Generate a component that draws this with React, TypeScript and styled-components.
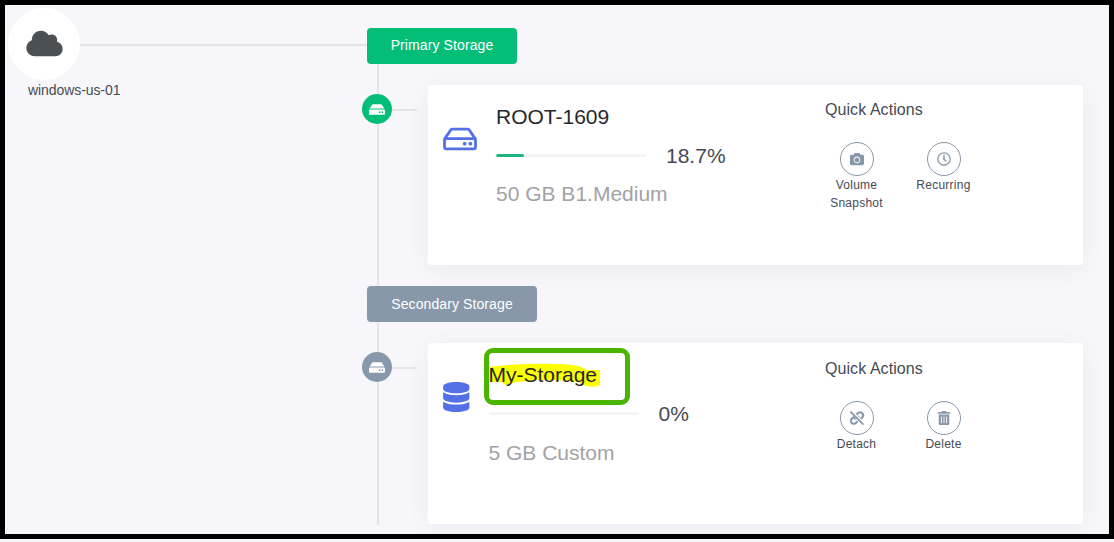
import React from "react";
import styled, { createGlobalStyle } from "styled-components";
import { FaCloud, FaHdd, FaRegHdd, FaDatabase, FaCamera, FaRegClock, FaTrashAlt } from "react-icons/fa";

const GlobalStyle = createGlobalStyle`
  * { box-sizing: border-box; }
  body { margin: 0; background: #f7f7fb; font-family: "Liberation Sans", Arial, sans-serif; color: #464a53; }
`;

const Frame = styled.main`
  height: 539px;
  border: 5px solid #000;
  background: #f7f7fb;
  display: flex;
  overflow: hidden;
`;

const Machine = styled.section`
  width: 362px;
  padding-top: 3px;
  padding-left: 3px;
`;

const MachineLink = styled.div`
  display: flex;
  align-items: center;
`;

const MachineBadge = styled.div`
  width: 72px;
  height: 72px;
  flex: none;
  border-radius: 50%;
  background: #fff;
  display: flex;
  align-items: center;
  justify-content: center;
  color: #4b5055;
  svg { width: 37px; height: 29px; margin-top: -2px; }
`;

const Connector = styled.div<{ $width?: number }>`
  height: 2px;
  margin-top: 2px;
  background: #e5e5e9;
  ${(p) => (p.$width ? `width: ${p.$width}px;` : "flex: 1;")}
`;

const MachineName = styled.div`
  margin: 2px 0 0 20px;
  font-size: 14px;
  line-height: 16px;
  letter-spacing: -0.08px;
`;

const Tree = styled.section`
  flex: 1;
  height: 520px;
  margin-left: -5px;
  padding-top: 23px;
  background: linear-gradient(#e5e5e9, #e5e5e9) 15px 23px / 2px 497px no-repeat;
`;

const Group = styled.div`
  height: 258px;
  display: flex;
  flex-direction: column;
  align-items: flex-start;
`;

const GroupLabel = styled.div<{ $width: number; $color: string; $lineHeight: number }>`
  width: ${(p) => p.$width}px;
  height: 36px;
  flex: none;
  margin-left: 5px;
  border-radius: 4px;
  background: ${(p) => p.$color};
  color: #fff;
  font-size: 14px;
  line-height: ${(p) => p.$lineHeight}px;
  text-align: center;
  letter-spacing: 0.1px;
`;

const Branch = styled.div`
  display: flex;
  margin-top: 21px;
`;

const Joint = styled.div`
  width: 66px;
  height: 30px;
  margin-top: 9px;
  display: flex;
  align-items: center;
`;

const Node = styled.div<{ $color: string }>`
  width: 30px;
  height: 30px;
  border-radius: 50%;
  background: ${(p) => p.$color};
  color: #fff;
  display: flex;
  align-items: center;
  justify-content: center;
  svg { width: 16px; height: 15px; }
`;

const Card = styled.article<{ $height: number }>`
  width: 655px;
  height: ${(p) => p.$height}px;
  border-radius: 3px;
  background: #fff;
  box-shadow: 0 4px 25px rgba(60, 50, 80, 0.07);
  display: flex;
`;

const Volume = styled.div`
  width: 397px;
  padding-left: 15px;
  display: flex;
`;

const VolumeIcon = styled.div<{ $column: number; $width: number }>`
  width: ${(p) => p.$column}px;
  padding-top: 39px;
  color: #5470e5;
  svg { height: 30px; width: ${(p) => p.$width}px; display: block; }
`;

const Details = styled.div`
  display: flex;
  flex-direction: column;
  font-size: 21px;
  line-height: 26px;
`;

const VolumeName = styled.div`
  position: relative;
  isolation: isolate;
  margin-top: 19px;
  color: #26282d;
`;

const Usage = styled.div`
  display: flex;
  align-items: center;
  gap: 20px;
  margin-top: 13px;
`;

const Track = styled.div`
  width: 150px;
  height: 3px;
  margin-bottom: 2px;
  border-radius: 2px;
  background: #f5f5f7;
  overflow: hidden;
`;

const Fill = styled.div`
  height: 100%;
  border-radius: 2px;
  background: #1eb37a;
`;

const Plan = styled.div<{ $gap: number }>`
  margin-top: ${(p) => p.$gap}px;
  color: #a1a2a6;
`;

const Marker = styled.svg`
  position: absolute;
  z-index: -1;
  left: 0;
  top: 1px;
`;

const Outline = styled.div`
  position: absolute;
  left: -5px;
  top: -14px;
  width: 146px;
  height: 57px;
  border: 5px solid #4ab400;
  border-radius: 9px;
`;

const Actions = styled.div<{ $top: number }>`
  padding-top: ${(p) => p.$top}px;
`;

const ActionsTitle = styled.div`
  font-size: 16px;
  line-height: 20px;
  letter-spacing: 0.07px;
`;

const ActionRow = styled.div`
  display: flex;
  margin: 22px 0 0 -12px;
`;

const Action = styled.div`
  width: 87px;
  display: flex;
  flex-direction: column;
  align-items: center;
  text-align: center;
  font-size: 12px;
  line-height: 18px;
  letter-spacing: 0.25px;
`;

const ActionIcon = styled.div`
  width: 34px;
  height: 34px;
  border: 1px solid #8898aa;
  border-radius: 50%;
  display: flex;
  align-items: center;
  justify-content: center;
  color: #8898aa;
  svg { height: 14px; width: 14px; }
`;

function BrokenLinkIcon() {
  return (
    <svg viewBox="0 0 14 14" fill="none" stroke="currentColor" strokeWidth="2.1" overflow="visible">
      <path d="M6 4.2 7.6 2.4C8.9 1 11 .9 12.2 2.2S13.4 5.4 12.1 6.7L10.4 8.2" />
      <path d="M4 5.8 1.9 7.6C.6 8.9.6 10.8 1.7 11.9S4.8 13 6.1 11.7L7.6 10.2" />
      <path d="M5.3 8.7C4.5 7.9 4.4 7 4.8 6.1M8.7 7.3C9 6.4 8.9 5.6 8.2 4.9" strokeWidth="1.7" />
      <path d="M2 0 14.8 12.8" stroke="#fff" strokeWidth="1.2" />
      <path d="M.4.6 13.4 13.6" strokeWidth="1.9" />
    </svg>
  );
}

type VolumeCardProps = {
  color: string;
  icon: React.ReactNode;
  iconColumn: number;
  iconWidth: number;
  name: React.ReactNode;
  used: number;
  plan: string;
  extra?: number;
  actions: { icon: React.ReactNode; label: React.ReactNode }[];
};

function VolumeCard({ color, icon, iconColumn, iconWidth, name, used, plan, extra = 0, actions }: VolumeCardProps) {
  return (
    <Branch>
      <Joint>
        <Node $color={color}><FaHdd /></Node>
        <Connector $width={25} />
      </Joint>
      <Card $height={180 + extra}>
        <Volume>
          <VolumeIcon $column={iconColumn} $width={iconWidth}>{icon}</VolumeIcon>
          <Details>
            <VolumeName>{name}</VolumeName>
            <Usage>
              <Track><Fill style={{ width: `${used}%` }} /></Track>
              <span>{used}%</span>
            </Usage>
            <Plan $gap={12 + extra}>{plan}</Plan>
          </Details>
        </Volume>
        <Actions $top={15 + extra}>
          <ActionsTitle>Quick Actions</ActionsTitle>
          <ActionRow>
            {actions.map((a, i) => (
              <Action key={i}><ActionIcon>{a.icon}</ActionIcon>{a.label}</Action>
            ))}
          </ActionRow>
        </Actions>
      </Card>
    </Branch>
  );
}

export default function App() {
  return (
    <>
      <GlobalStyle />
      <Frame>
        <Machine>
          <MachineLink>
            <MachineBadge><FaCloud /></MachineBadge>
            <Connector />
          </MachineLink>
          <MachineName>windows-us-01</MachineName>
        </Machine>
        <Tree>
          <Group>
            <GroupLabel $width={150} $color="#04be78" $lineHeight={35}>Primary Storage</GroupLabel>
            <VolumeCard
              color="#04be78"
              icon={<FaRegHdd />}
              iconColumn={53}
              iconWidth={34}
              name="ROOT-1609"
              used={18.7}
              plan="50 GB B1.Medium"
              actions={[
                { icon: <FaCamera />, label: <>Volume<br />Snapshot</> },
                { icon: <FaRegClock />, label: "Recurring" },
              ]}
            />
          </Group>
          <Group>
            <GroupLabel $width={170} $color="#8898aa" $lineHeight={37}>Secondary Storage</GroupLabel>
            <VolumeCard
              color="#8898aa"
              icon={<FaDatabase />}
              iconColumn={45.5}
              iconWidth={26.5}
              extra={1}
              name={
                <>
                  <Marker width="112" height="25" viewBox="0 0 112 25">
                    <path d="M0 4C20 1 70-1 90 3L98 7H111V22C107 24.500 97 24.500 93 21L88 19C70 17 58 17 49 17L28 19 17 22 12 19H0Z" fill="#fbff00" />
                  </Marker>
                  My-Storage
                  <Outline />
                </>
              }
              used={0}
              plan="5 GB Custom"
              actions={[
                { icon: <BrokenLinkIcon />, label: "Detach" },
                { icon: <FaTrashAlt />, label: "Delete" },
              ]}
            />
          </Group>
        </Tree>
      </Frame>
    </>
  );
}
